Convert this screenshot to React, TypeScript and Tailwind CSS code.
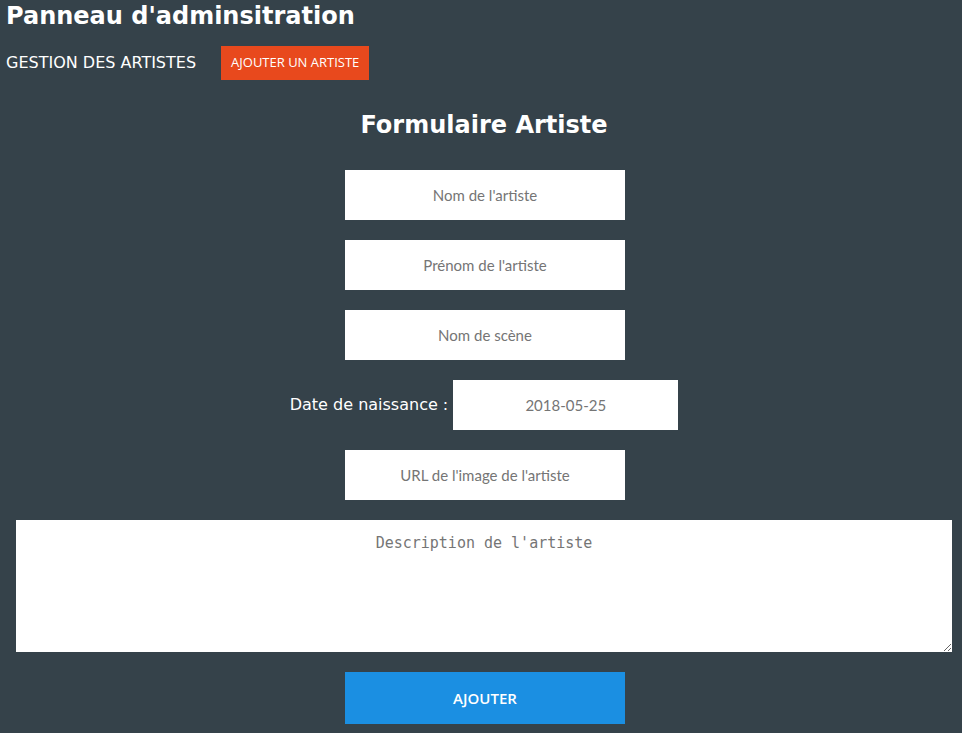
import { useState } from "react";

const inputCls =
  "w-[280px] h-[50px] bg-white text-center text-[15px] text-gray-800 placeholder:text-[#757575] outline-none font-['Lato',sans-serif]";

function ArtistForm() {
  const [birth, setBirth] = useState("2018-05-25");

  return (
    <form
      className="ml-4 w-[936px] flex flex-col items-center gap-5"
      onSubmit={(e) => e.preventDefault()}
    >
      <h2 className="mt-[30px] mb-[10px] text-[24px] leading-[30px] font-bold text-white font-['DejaVu_Sans',sans-serif]">
        Formulaire Artiste
      </h2>
      <input className={inputCls + " translate-x-px"} placeholder="Nom de l'artiste" />
      <input className={inputCls + " translate-x-px"} placeholder="Prénom de l'artiste" />
      <input className={inputCls + " translate-x-px"} placeholder="Nom de scène" />
      <div className="flex items-center">
        <label className="mr-[5px] text-[16px] text-white font-['DejaVu_Sans',sans-serif]">
          Date de naissance :
        </label>
        <input
          className="w-[225px] h-[50px] bg-white text-center text-[15px] text-[#757575] outline-none font-['Lato',sans-serif]"
          value={birth}
          onChange={(e) => setBirth(e.target.value)}
        />
      </div>
      <input className={inputCls + " translate-x-px"} placeholder="URL de l'image de l'artiste" />
      <textarea
        className="w-full h-[132px] bg-white pt-[12px] text-center text-[15px] leading-[22px] text-gray-800 placeholder:text-[#757575] outline-none font-['DejaVu_Sans_Mono',monospace]"
        placeholder="Description de l'artiste"
      />
      <button
        type="submit"
        className="w-[280px] h-[52px] translate-x-px bg-[#1b8fe2] text-white text-[15px] font-semibold font-['Open_Sans',sans-serif]"
      >
        AJOUTER
      </button>
    </form>
  );
}

export default function App() {
  return (
    <div className="min-h-[733px] bg-[#35424a] pb-4">
      <h1 className="px-[6px] pt-[1px] text-[24px] leading-[30px] font-bold text-white font-['DejaVu_Sans',sans-serif]">
        Panneau d'adminsitration
      </h1>
      <nav className="mt-[15px] flex items-center px-[6px]">
        <span className="text-[16px] text-white font-['DejaVu_Sans',sans-serif]">
          GESTION DES ARTISTES
        </span>
        <button className="ml-[25px] h-[34px] px-[10px] bg-[#e8491d] text-white text-[13px] font-['Open_Sans',sans-serif]">
          AJOUTER UN ARTISTE
        </button>
      </nav>
      <ArtistForm />
    </div>
  );
}
